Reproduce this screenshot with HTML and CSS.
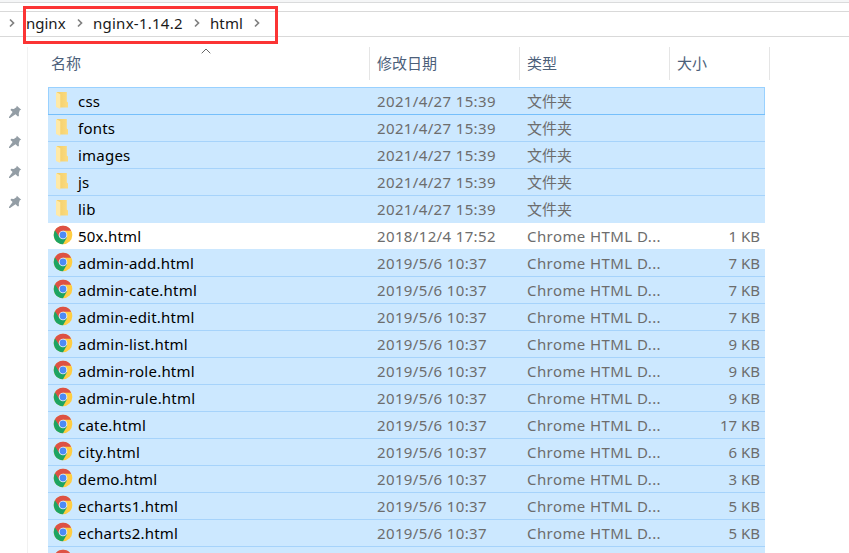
FILE: index.html
```
<!DOCTYPE html>
<html lang="zh-CN">
<head>
<meta charset="utf-8">
<title>html</title>
<link rel="stylesheet" href="styles.css">
</head>
<body>
<svg class="defs" aria-hidden="true">
  <defs>
    <linearGradient id="gold" x1="0" x2="1"><stop offset="0" stop-color="#f3ce69"/><stop offset="1" stop-color="#fbdb80"/></linearGradient>
    <symbol id="folder" viewBox="0 0 20 20"><path d="M4 2h9.8v9.6l1.2 1V17.5H5z" fill="url(#gold)"/><path d="M3 2l4.3 2.2V19L3 17z" fill="#ffe9a6"/></symbol>
    <symbol id="chrome" viewBox="0 0 20 20">
      <circle cx="10" cy="10" r="9.3" fill="#ffcd41"/>
      <path d="M10 10L1.95 5.35A9.3 9.3 0 0 0 10 19.3L14 12.3z" fill="#1da462"/>
      <path d="M1.95 5.35A9.3 9.3 0 0 1 18.2 5.8H10L6.3 12.1z" fill="#dd5144"/>
      <circle cx="10" cy="10" r="4.3" fill="#f4f4f4"/><circle cx="10" cy="10" r="3.4" fill="#4c8bf5"/>
    </symbol>
    <symbol id="pin" viewBox="0 0 14 14"><path d="M8.8.8l4.4 4-1.4.5-1 3 .1 2.7-1 .5-2.4-2.2L2 13H1v-1l3.6-5.1L2.5 5l.6-1.2 2.7.1 2.6-1.6z" fill="#939da5"/></symbol>
    <symbol id="chevron" viewBox="0 0 8 10"><path d="M2 1.5L5.5 5 2 8.5" fill="none" stroke="#808080" stroke-width="1.7"/></symbol>
  </defs>
</svg>
<div class="window">
  <div class="ribbon-edge"></div>
  <nav class="address">
    <svg class="chev"><use href="#chevron"/></svg>
    <span class="crumb c1">nginx</span><svg class="chev"><use href="#chevron"/></svg>
    <span class="crumb c2">nginx-1.14.2</span><svg class="chev"><use href="#chevron"/></svg>
    <span class="crumb c3">html</span><svg class="chev"><use href="#chevron"/></svg>
  </nav>
  <div class="highlight"></div>
  <div class="body">
    <aside class="sidebar">
      <svg><use href="#pin"/></svg><svg><use href="#pin"/></svg><svg><use href="#pin"/></svg><svg><use href="#pin"/></svg>
    </aside>
    <main class="files">
      <header class="head">
        <div>名称<svg class="sort" viewBox="0 0 10 6"><path d="M.7 5.3L5 1l4.3 4.3" fill="none" stroke="#666"/></svg></div><div>修改日期</div><div>类型</div><div>大小</div>
      </header>
      <div class="rows">
        <div class="row focus"><svg><use href="#folder"/></svg><span class="name">css</span><span class="date">2021/4/27 15:39</span><span>文件夹</span><span></span></div>
        <div class="row"><svg><use href="#folder"/></svg><span class="name">fonts</span><span class="date">2021/4/27 15:39</span><span>文件夹</span><span></span></div>
        <div class="row"><svg><use href="#folder"/></svg><span class="name">images</span><span class="date">2021/4/27 15:39</span><span>文件夹</span><span></span></div>
        <div class="row"><svg><use href="#folder"/></svg><span class="name">js</span><span class="date">2021/4/27 15:39</span><span>文件夹</span><span></span></div>
        <div class="row"><svg><use href="#folder"/></svg><span class="name">lib</span><span class="date">2021/4/27 15:39</span><span>文件夹</span><span></span></div>
        <div class="row plain"><svg><use href="#chrome"/></svg><span class="name">50x.html</span><span class="date">2018/12/4 17:52</span><span class="type">Chrome HTML D...</span><span class="size">1 KB</span></div>
        <div class="row first"><svg><use href="#chrome"/></svg><span class="name">admin-add.html</span><span class="date">2019/5/6 10:37</span><span class="type">Chrome HTML D...</span><span class="size">7 KB</span></div>
        <div class="row"><svg><use href="#chrome"/></svg><span class="name">admin-cate.html</span><span class="date">2019/5/6 10:37</span><span class="type">Chrome HTML D...</span><span class="size">7 KB</span></div>
        <div class="row"><svg><use href="#chrome"/></svg><span class="name">admin-edit.html</span><span class="date">2019/5/6 10:37</span><span class="type">Chrome HTML D...</span><span class="size">7 KB</span></div>
        <div class="row"><svg><use href="#chrome"/></svg><span class="name">admin-list.html</span><span class="date">2019/5/6 10:37</span><span class="type">Chrome HTML D...</span><span class="size">9 KB</span></div>
        <div class="row"><svg><use href="#chrome"/></svg><span class="name">admin-role.html</span><span class="date">2019/5/6 10:37</span><span class="type">Chrome HTML D...</span><span class="size">9 KB</span></div>
        <div class="row"><svg><use href="#chrome"/></svg><span class="name">admin-rule.html</span><span class="date">2019/5/6 10:37</span><span class="type">Chrome HTML D...</span><span class="size">9 KB</span></div>
        <div class="row"><svg><use href="#chrome"/></svg><span class="name">cate.html</span><span class="date">2019/5/6 10:37</span><span class="type">Chrome HTML D...</span><span class="size">17 KB</span></div>
        <div class="row"><svg><use href="#chrome"/></svg><span class="name">city.html</span><span class="date">2019/5/6 10:37</span><span class="type">Chrome HTML D...</span><span class="size">6 KB</span></div>
        <div class="row"><svg><use href="#chrome"/></svg><span class="name">demo.html</span><span class="date">2019/5/6 10:37</span><span class="type">Chrome HTML D...</span><span class="size">3 KB</span></div>
        <div class="row"><svg><use href="#chrome"/></svg><span class="name">echarts1.html</span><span class="date">2019/5/6 10:37</span><span class="type">Chrome HTML D...</span><span class="size">5 KB</span></div>
        <div class="row"><svg><use href="#chrome"/></svg><span class="name">echarts2.html</span><span class="date">2019/5/6 10:37</span><span class="type">Chrome HTML D...</span><span class="size">5 KB</span></div>
        <div class="row"><svg><use href="#chrome"/></svg></div>
      </div>
    </main>
  </div>
</div>
</body>
</html>
```

FILE: styles.css
```
* { box-sizing: border-box; }
body { margin: 0; background: #fff; font: 15px/20px "Noto Sans", "Noto Sans CJK SC", sans-serif; color: #000; }
.defs { position: absolute; width: 0; height: 0; }
.window { position: relative; width: 849px; height: 553px; overflow: hidden; display: flex; flex-direction: column; }
.ribbon-edge { flex: none; height: 3px; background: #f5f6f7; border-bottom: 1px solid #dadbdc; }
.address { flex: none; height: 26px; margin-top: 8px; border: solid #d9d9d9; border-width: 1px 0; display: flex; align-items: center; padding: 0 0 2px 8px; color: #1a1a1a; }
.chev { width: 8px; height: 10px; flex: none; margin-top: -1px; }
.crumb { white-space: nowrap; }
.c1 { width: 50px; margin-left: 10px; }
.c2 { width: 100px; margin-left: 9px; letter-spacing: .25px; }
.c3 { width: 43px; margin-left: 9px; letter-spacing: .1px; }
.highlight { position: absolute; left: 23px; top: 6px; width: 255px; height: 38px; border: 3px solid #fb3434; }
.body { flex: 1; min-height: 0; display: flex; padding-top: 10px; }
.sidebar { width: 28px; border-right: 1px solid #f1f1f1; padding: 58px 0 0 8px; display: flex; flex-direction: column; gap: 16px; }
.sidebar svg { width: 14px; height: 14px; flex: none; }
.files { flex: 1; padding-left: 20px; min-width: 0; }
.head { display: grid; grid-template-columns: 322px 150px 150px 100px; height: 33px; color: #4c607a; margin-bottom: 7px; }
.head div { position: relative; border-right: 1px solid #e5e5e5; padding: 6px 0 0 7px; }
.head div:first-child { padding-left: 3px; }
.sort { position: absolute; width: 10px; height: 6px; left: 153px; top: 1px; }
.rows { width: 717px; }
.row { height: 27px; display: grid; grid-template-columns: 30px 299px 150px 140px 1fr; align-items: center; border-top: 1px solid #a6d3fb; background: #cce8ff; color: #6d6d6d; white-space: nowrap; }
.row svg { width: 20px; height: 20px; margin: -3px 0 0 5px; }
.row .name { color: #000; letter-spacing: .22px; }
.date { letter-spacing: .36px; }
.type { letter-spacing: .42px; }
.size { text-align: right; padding-right: 5px; }
.focus { border-color: #99d1ff; box-shadow: inset 1px 0 #99d1ff, inset -1px 0 #99d1ff; }
.focus + .row { border-color: #75bffb; }
.plain { background: #fff; border-color: #cce8ff; }
.first { border-color: #cce8ff; }
```
